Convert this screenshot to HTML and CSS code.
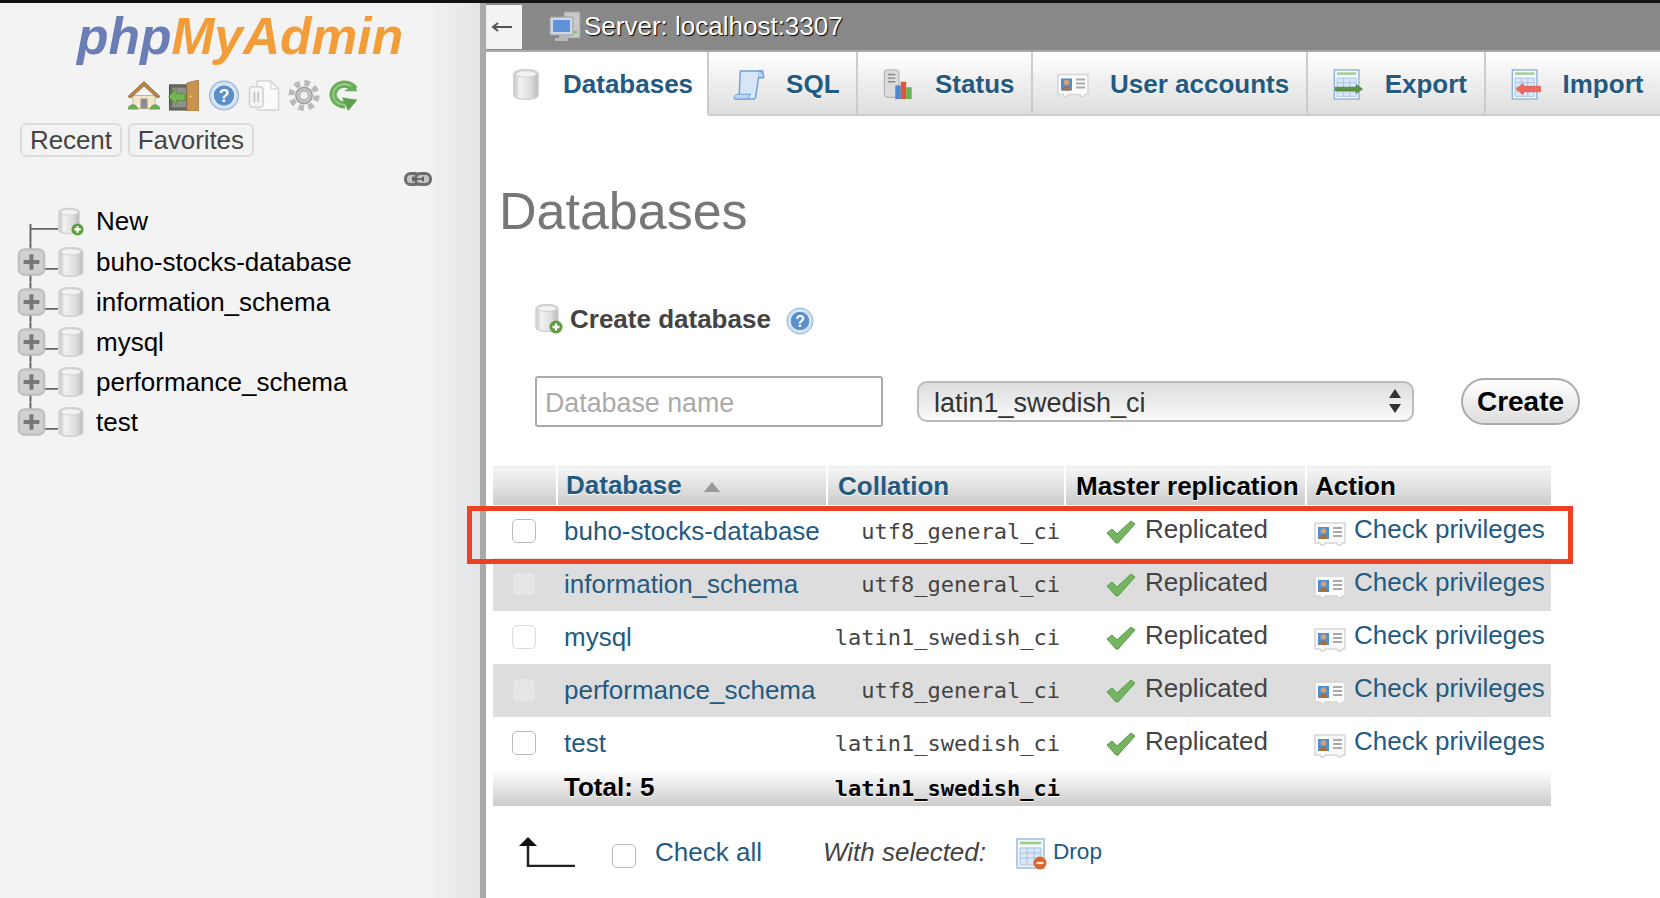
FILE: index.html
```html
<!DOCTYPE html>
<html lang="en">
<head>
    <meta charset="UTF-8">
    <meta name="viewport" content="width=device-width, initial-scale=1.0">
    <title>phpMyAdmin - Databases</title>
    <link rel="stylesheet" href="styles.css">
</head>
<body>
    <svg class="gradient-defs" xmlns="http://www.w3.org/2000/svg">
        <defs>
            <linearGradient id="cyl" x1="0" x2="1" y1="0" y2="0">
                <stop offset="0" stop-color="#c4c4c4"/>
                <stop offset="0.25" stop-color="#f2f2f2"/>
                <stop offset="0.7" stop-color="#dcdcdc"/>
                <stop offset="1" stop-color="#b9b9b9"/>
            </linearGradient>
        </defs>
    </svg>
    <svg class="icon-defs" xmlns="http://www.w3.org/2000/svg">
        <symbol id="i-db" viewBox="0 0 24 28">
            <path d="M1 5c0-6 22-6 22 0v18c0 6-22 6-22 0z" fill="url(#cyl)" stroke="#d2d2d2" stroke-width="1.500"/>
            <ellipse cx="12" cy="4.500" rx="9.500" ry="3" fill="#f2f2f2" stroke="#d0d0d0"/>
        </symbol>
        <symbol id="i-dbnew" viewBox="0 0 28 30">
            <path d="M1 5c0-6 22-6 22 0v18c0 6-22 6-22 0z" fill="url(#cyl)" stroke="#d2d2d2" stroke-width="1.500"/>
            <ellipse cx="12" cy="4.500" rx="9.500" ry="3" fill="#f2f2f2" stroke="#d0d0d0"/>
            <circle cx="21" cy="23" r="6.500" fill="#5f9e3c"/>
            <path d="M21 19.500v7M17.500 23h7" stroke="#fff" stroke-width="2.400"/>
        </symbol>
        <symbol id="i-home" viewBox="0 0 32 30">
            <path d="M5 15h22v13H5z" fill="#f3e7d0" stroke="#c9b48f"/>
            <path d="M0 16 16 1l16 15-2.500 1.500L16 5.500 2.500 17.500z" fill="#b5854f" stroke="#8f6534" stroke-width=".8"/>
            <path d="M12.500 18h7v10h-7z" fill="#8d8d8d"/>
            <path d="M0 27c2-4 7-4 9-1l2 3H0zM32 27c-2-4-7-4-9-1l-2 3h11z" fill="#6cab54"/>
        </symbol>
        <symbol id="i-exit" viewBox="0 0 32 32">
            <path d="M1 5h20v26H1z" fill="#6b6b62" stroke="#4e4e46"/>
            <path d="M4 8h14v20H4z" fill="#8f918a"/>
            <path d="M19 3l12-3v32H19z" fill="#c8924f" stroke="#a0713a" stroke-width=".8"/>
            <path d="M0 17l8-8v5h9v7H8v5z" fill="#74b552" stroke="#4e8a35" stroke-width=".8"/>
            <circle cx="23" cy="17" r="1" fill="#f2d25c"/>
        </symbol>
        <symbol id="i-help" viewBox="0 0 30 30">
            <circle cx="15" cy="15" r="14" fill="#cfdff2" stroke="#8fb2dc"/>
            <circle cx="15" cy="15" r="10.500" fill="#5b8fcb" stroke="#f4f8fc" stroke-width="1"/>
            <text x="15" y="21" text-anchor="middle" font-family="Liberation Sans" font-weight="700" font-size="17" fill="#fff">?</text>
        </symbol>
        <symbol id="i-docs" viewBox="0 0 32 32">
            <path d="M9 1h14l8 8v22H9z" fill="#fafafa" stroke="#d4d4d4" stroke-width="1.500"/>
            <path d="M23 1v8h8" fill="none" stroke="#dcdcdc" stroke-width="1.500"/>
            <rect x="1" y="7" width="14" height="21" rx="3" fill="#f4f4f4" stroke="#cfcfcf" stroke-width="1.500"/>
            <path d="M6 12v11M10 12v11" stroke="#c9c9c9" stroke-width="2"/>
        </symbol>
        <symbol id="i-gear" viewBox="0 0 32 32">
            <circle cx="16" cy="16" r="13" fill="none" stroke="#b9b9b9" stroke-width="6" stroke-dasharray="5.600 4.610"/>
            <circle cx="16" cy="16" r="8.500" fill="#c4c4c4" stroke="#9c9c9c" stroke-width="1.500"/>
            <circle cx="16" cy="16" r="4.500" fill="#efefef" stroke="#a5a5a5"/>
        </symbol>
        <symbol id="i-reload" viewBox="0 0 28 30">
            <path d="M24 9A11 10 0 1 0 15 24" fill="none" stroke="#6aad5a" stroke-width="7"/>
            <path d="M24 9A11 10 0 1 0 15 24" fill="none" stroke="#9fd28f" stroke-width="1.500"/>
            <path d="M12 17l15 2-9 11z" fill="#5f9f50"/>
            <path d="M14 11h13l-3-7z" fill="#6aad5a"/>
        </symbol>
        <symbol id="i-chain" viewBox="0 0 28 14">
            <rect x="1.500" y="1.500" width="15" height="11" rx="5" fill="#c4c4c4" stroke="#6d6d6d" stroke-width="3"/>
            <rect x="11.500" y="1.500" width="15" height="11" rx="5" fill="#c4c4c4" stroke="#6d6d6d" stroke-width="3"/>
            <path d="M8 7h12M9 4.500v5M19 4.500v5" stroke="#555" stroke-width="1.500"/>
        </symbol>
        <symbol id="i-scroll" viewBox="0 0 32 32">
            <path d="M7 2h24c-4 0-5 3-5 6l-3 20c0 2-2 3-4 3H1c3 0 4-2 5-5z" fill="#d6e6f8" stroke="#6f9fd8" stroke-width="1.500"/>
            <path d="M25 2c3 0 6 1 6 4v3h-5" fill="#b9d3f1" stroke="#6f9fd8" stroke-width="1.500"/>
            <path d="M1 31c-1-3 1-5 5-5h12c-2 1-3 3-2 5z" fill="#b9d3f1" stroke="#6f9fd8"/>
        </symbol>
        <symbol id="i-status" viewBox="0 0 32 34">
            <rect x="1" y="1" width="16" height="30" rx="3" fill="#dcdcdc" stroke="#a5a5a5"/>
            <path d="M5 6h8M5 10h8M5 14h8" stroke="#8a8a8a" stroke-width="1.500"/>
            <path d="M13 18h6v15h-6z" fill="#4a86d3"/>
            <path d="M19 14h6v19h-6z" fill="#d95a3c"/>
            <path d="M25 20h6v13h-6z" fill="#6db04f"/>
        </symbol>
        <symbol id="i-card" viewBox="0 0 32 26">
            <path d="M1 3h30v20h-3l-1 2h-3l-1-2H11l-1 2H7l-1-2H1z" fill="#fbfbfb" stroke="#d6d6d6" stroke-width="1.500"/>
            <rect x="4" y="7" width="11" height="12" fill="#4a90d9"/>
            <circle cx="9.500" cy="11" r="2.800" fill="#d9a06b"/>
            <path d="M5.500 19c0-6 8-6 8 0z" fill="#a96f3c"/>
            <path d="M19 8h9M19 12h9M19 16h9" stroke="#a9a9a9" stroke-width="2"/>
        </symbol>
        <symbol id="i-export" viewBox="0 0 32 34">
            <rect x="1" y="1" width="27" height="32" fill="#f2f7fd" stroke="#8db0dc" stroke-width="1.500"/>
            <path d="M4 5h21" stroke="#9dcc84" stroke-width="2.500"/>
            <path d="M4 10h21v20H4zM4 15h21M4 20h21M4 25h21M11 10v20M18 10v20" fill="#dbe7f5" stroke="#a9c3e3"/>
            <path d="M2 20h23v-3l7 5-7 5v-3H2z" fill="#5d9345" stroke="#3f7330" stroke-width=".6"/>
        </symbol>
        <symbol id="i-import" viewBox="0 0 32 34">
            <rect x="1" y="1" width="27" height="32" fill="#f2f7fd" stroke="#8db0dc" stroke-width="1.500"/>
            <path d="M4 5h21" stroke="#9dcc84" stroke-width="2.500"/>
            <path d="M4 10h21v20H4zM4 15h21M4 20h21M4 25h21M11 10v20M18 10v20" fill="#dbe7f5" stroke="#a9c3e3"/>
            <path d="M32 19H13v-3l-8 6 8 6v-3h19z" fill="#ee6a62" stroke="#d63f36" stroke-width=".6"/>
        </symbol>
        <symbol id="i-drop" viewBox="0 0 31 32">
            <rect x="1" y="1" width="27" height="29" fill="#f2f7fd" stroke="#9dbbe0" stroke-width="1.500"/>
            <path d="M4 5h21" stroke="#9dcc84" stroke-width="2.500"/>
            <path d="M4 10h21v17H4zM4 15h21M4 20h21M11 10v17M18 10v17" fill="#dbe7f5" stroke="#a9c3e3"/>
            <circle cx="24" cy="25" r="6.500" fill="#d9682c"/>
            <path d="M20.500 25h7" stroke="#fbe3d2" stroke-width="2.200"/>
        </symbol>
        <symbol id="i-check" viewBox="0 0 30 24">
            <path d="M1 13l5-4 5 5L25 1l4 3-17 19h-2z" fill="#75b562" stroke="#599a49"/>
        </symbol>
        <symbol id="i-server" viewBox="0 0 32 32">
            <rect x="15" y="1" width="16" height="26" fill="#c9c9c9" stroke="#a0a0a0"/>
            <path d="M25 21h3" stroke="#6fbf5a" stroke-width="2"/>
            <rect x="1" y="6" width="23" height="18" rx="1" fill="#cfd8e4" stroke="#9b9b9b"/>
            <rect x="4" y="9" width="17" height="12" fill="#5f92d8"/>
            <path d="M10 24h5v3h4v3H6v-3h4z" fill="#b8b8b8"/>
        </symbol>
    </svg>

    <div class="top-strip"></div>

    <div class="page">
        <nav class="sidebar">
            <div class="logo"><span class="logo-php">php</span><span class="logo-my">MyAdmin</span></div>

            <div class="quick-icons">
                <svg class="quick-icon"><use href="#i-home"/></svg>
                <svg class="quick-icon"><use href="#i-exit"/></svg>
                <svg class="quick-icon"><use href="#i-help"/></svg>
                <svg class="quick-icon"><use href="#i-docs"/></svg>
                <svg class="quick-icon"><use href="#i-gear"/></svg>
                <svg class="quick-icon"><use href="#i-reload"/></svg>
            </div>

            <div class="recent-tabs">
                <button class="recent-tab">Recent</button>
                <button class="recent-tab">Favorites</button>
            </div>

            <div class="link-row">
                <svg class="chain-icon"><use href="#i-chain"/></svg>
            </div>

            <ul class="tree">
                <li class="tree-row">
                    <svg class="tree-lines" viewBox="0 0 59 40"><path d="M31 22v19M31 27h28" fill="none" stroke="#666" stroke-width="2"/></svg>
                    <svg class="tree-db"><use href="#i-dbnew"/></svg>
                    <span class="tree-name tree-name-new">New</span>
                </li>
                <li class="tree-row">
                    <svg class="tree-lines" viewBox="0 0 59 40"><path d="M31 0v40M45 27h14" fill="none" stroke="#666" stroke-width="2"/><rect x="19" y="7" width="26" height="26" rx="6" fill="#d0d0d0" stroke="#bcbcbc" stroke-width="2"/><path d="M24 20h16M32 12v16" stroke="#777" stroke-width="4"/></svg>
                    <svg class="tree-db"><use href="#i-db"/></svg>
                    <span class="tree-name">buho-stocks-database</span>
                </li>
                <li class="tree-row">
                    <svg class="tree-lines" viewBox="0 0 59 40"><path d="M31 0v40M45 27h14" fill="none" stroke="#666" stroke-width="2"/><rect x="19" y="7" width="26" height="26" rx="6" fill="#d0d0d0" stroke="#bcbcbc" stroke-width="2"/><path d="M24 20h16M32 12v16" stroke="#777" stroke-width="4"/></svg>
                    <svg class="tree-db"><use href="#i-db"/></svg>
                    <span class="tree-name">information_schema</span>
                </li>
                <li class="tree-row">
                    <svg class="tree-lines" viewBox="0 0 59 40"><path d="M31 0v40M45 27h14" fill="none" stroke="#666" stroke-width="2"/><rect x="19" y="7" width="26" height="26" rx="6" fill="#d0d0d0" stroke="#bcbcbc" stroke-width="2"/><path d="M24 20h16M32 12v16" stroke="#777" stroke-width="4"/></svg>
                    <svg class="tree-db"><use href="#i-db"/></svg>
                    <span class="tree-name">mysql</span>
                </li>
                <li class="tree-row">
                    <svg class="tree-lines" viewBox="0 0 59 40"><path d="M31 0v40M45 27h14" fill="none" stroke="#666" stroke-width="2"/><rect x="19" y="7" width="26" height="26" rx="6" fill="#d0d0d0" stroke="#bcbcbc" stroke-width="2"/><path d="M24 20h16M32 12v16" stroke="#777" stroke-width="4"/></svg>
                    <svg class="tree-db"><use href="#i-db"/></svg>
                    <span class="tree-name">performance_schema</span>
                </li>
                <li class="tree-row">
                    <svg class="tree-lines" viewBox="0 0 59 40"><path d="M31 0v10M45 27h14" fill="none" stroke="#666" stroke-width="2"/><rect x="19" y="7" width="26" height="26" rx="6" fill="#d0d0d0" stroke="#bcbcbc" stroke-width="2"/><path d="M24 20h16M32 12v16" stroke="#777" stroke-width="4"/></svg>
                    <svg class="tree-db"><use href="#i-db"/></svg>
                    <span class="tree-name">test</span>
                </li>
            </ul>
        </nav>

        <main class="content">
            <div class="server-bar">
                <div class="back-button">
                    <svg class="back-arrow" viewBox="0 0 22 14"><path d="M22 7H4M8 3 3 7l5 4" fill="none" stroke="#555" stroke-width="2"/></svg>
                </div>
                <svg class="server-icon"><use href="#i-server"/></svg>
                <span class="server-name">Server: localhost:3307</span>
            </div>

            <div class="tabs">
                <a class="tab tab-active"><svg class="tab-icon"><use href="#i-db"/></svg>Databases</a>
                <a class="tab"><svg class="tab-icon"><use href="#i-scroll"/></svg>SQL</a>
                <a class="tab"><svg class="tab-icon"><use href="#i-status"/></svg>Status</a>
                <a class="tab"><svg class="tab-icon"><use href="#i-card"/></svg>User accounts</a>
                <a class="tab"><svg class="tab-icon"><use href="#i-export"/></svg>Export</a>
                <a class="tab"><svg class="tab-icon"><use href="#i-import"/></svg>Import</a>
            </div>

            <h1 class="page-title">Databases</h1>

            <div class="create-title">
                <svg class="create-icon"><use href="#i-dbnew"/></svg>
                <strong>Create database</strong>
                <svg class="create-help"><use href="#i-help"/></svg>
            </div>

            <form class="create-form">
                <input class="db-name" type="text" placeholder="Database name">
                <div class="collation-select">
                    <select>
                        <option>latin1_swedish_ci</option>
                    </select>
                    <svg class="select-arrows" viewBox="0 0 12 24"><path d="M6 0l6 9H0zM6 24l6-9H0z" fill="#333"/></svg>
                </div>
                <button class="create-button" type="button">Create</button>
            </form>

            <div class="table-wrap">
                <table class="db-table">
                    <colgroup>
                        <col class="col-check">
                        <col class="col-name">
                        <col class="col-collation">
                        <col class="col-replication">
                        <col class="col-action">
                    </colgroup>
                    <thead>
                        <tr>
                            <th></th>
                            <th><a class="sort-link">Database</a><svg class="sort-arrow" viewBox="0 0 16 10"><path d="M8 0l8 10H0z" fill="#999"/></svg></th>
                            <th class="th-link">Collation</th>
                            <th class="th-wide">Master replication</th>
                            <th>Action</th>
                        </tr>
                    </thead>
                    <tbody>
                        <tr>
                            <td class="cell-check"><input class="row-check row-check-strong" type="checkbox"></td>
                            <td><a class="db-link">buho-stocks-database</a></td>
                            <td class="cell-collation">utf8_general_ci</td>
                            <td><div class="status-cell"><svg class="check-icon"><use href="#i-check"/></svg>Replicated</div></td>
                            <td><div class="action-cell"><svg class="card-icon"><use href="#i-card"/></svg><a class="db-link">Check privileges</a></div></td>
                        </tr>
                        <tr class="row-alt">
                            <td class="cell-check"><input class="row-check" type="checkbox"></td>
                            <td><a class="db-link">information_schema</a></td>
                            <td class="cell-collation">utf8_general_ci</td>
                            <td><div class="status-cell"><svg class="check-icon"><use href="#i-check"/></svg>Replicated</div></td>
                            <td><div class="action-cell"><svg class="card-icon"><use href="#i-card"/></svg><a class="db-link">Check privileges</a></div></td>
                        </tr>
                        <tr>
                            <td class="cell-check"><input class="row-check" type="checkbox"></td>
                            <td><a class="db-link">mysql</a></td>
                            <td class="cell-collation">latin1_swedish_ci</td>
                            <td><div class="status-cell"><svg class="check-icon"><use href="#i-check"/></svg>Replicated</div></td>
                            <td><div class="action-cell"><svg class="card-icon"><use href="#i-card"/></svg><a class="db-link">Check privileges</a></div></td>
                        </tr>
                        <tr class="row-alt">
                            <td class="cell-check"><input class="row-check" type="checkbox"></td>
                            <td><a class="db-link">performance_schema</a></td>
                            <td class="cell-collation">utf8_general_ci</td>
                            <td><div class="status-cell"><svg class="check-icon"><use href="#i-check"/></svg>Replicated</div></td>
                            <td><div class="action-cell"><svg class="card-icon"><use href="#i-card"/></svg><a class="db-link">Check privileges</a></div></td>
                        </tr>
                        <tr>
                            <td class="cell-check"><input class="row-check row-check-strong" type="checkbox"></td>
                            <td><a class="db-link">test</a></td>
                            <td class="cell-collation">latin1_swedish_ci</td>
                            <td><div class="status-cell"><svg class="check-icon"><use href="#i-check"/></svg>Replicated</div></td>
                            <td><div class="action-cell"><svg class="card-icon"><use href="#i-card"/></svg><a class="db-link">Check privileges</a></div></td>
                        </tr>
                    </tbody>
                    <tfoot>
                        <tr>
                            <td></td>
                            <td>Total: 5</td>
                            <td class="cell-collation">latin1_swedish_ci</td>
                            <td></td>
                            <td></td>
                        </tr>
                    </tfoot>
                </table>
                <div class="highlight-box"></div>
            </div>

            <div class="bulk-row">
                <svg class="bulk-arrow" viewBox="0 0 57 30"><path d="M10 30V4M10 29h47" fill="none" stroke="#222" stroke-width="2.500"/><path d="M10 0l9 9H1z" fill="#111"/></svg>
                <input class="row-check row-check-strong" type="checkbox">
                <a class="db-link check-all">Check all</a>
                <em class="with-selected">With selected:</em>
                <svg class="drop-icon"><use href="#i-drop"/></svg>
                <a class="drop-link">Drop</a>
            </div>
        </main>
    </div>
</body>
</html>
```

FILE: styles.css
```css
* {
    box-sizing: border-box;
}

html, body {
    height: 100%;
}

body {
    margin: 0;
    overflow: hidden;
    background-color: #fff;
    font-family: "Liberation Sans", Arial, sans-serif;
    font-size: 26px;
    color: #444;
}

/* display:none would switch the gradient off, so it gets its own empty svg */
.gradient-defs {
    position: absolute;
    width: 0;
    height: 0;
}

.icon-defs {
    display: none;
}

svg {
    flex-shrink: 0;
}

.top-strip {
    height: 3px;
    background-color: #111;
}

.page {
    display: flex;
    height: 895px;
}

/* sidebar */

.sidebar {
    width: 486px;
    flex-shrink: 0;
    border-right: 6px solid #aaa;
    background: linear-gradient(to right, #f3f3f3 0%, #f3f3f3 88%, #e3e4e6 100%);
}

.logo {
    margin: 2px 0 0 77px;
    height: 62px;
    font-size: 51.500px;
    line-height: 62px;
    font-weight: bold;
    font-style: italic;
}

.logo-php {
    color: #6a7db5;
}

.logo-my {
    color: #f29d38;
}

.quick-icons {
    display: flex;
    gap: 8px;
    margin: 13px 0 0 128px;
}

.quick-icon {
    width: 32px;
    height: 31px;
}

.recent-tabs {
    display: flex;
    gap: 6px;
    margin: 12px 0 0 20px;
}

.recent-tab {
    height: 34px;
    padding: 0 8px;
    background: #f3f3f3;
    border: 2px solid #ddd;
    border-radius: 6px;
    font-family: inherit;
    font-size: 26px;
    line-height: 28px;
    letter-spacing: -0.1px;
    color: #444;
}

.link-row {
    display: flex;
    justify-content: flex-end;
    padding-right: 48px;
    margin-top: 15px;
}

.chain-icon {
    width: 28px;
    height: 14px;
}

.tree {
    list-style: none;
    margin: 16px 0 0;
    padding: 0;
}

.tree-row {
    display: flex;
    align-items: center;
    height: 40px;
    color: #000;
}

.tree-lines {
    width: 58px;
    height: 40px;
}

.tree-db {
    width: 26px;
    height: 30px;
}

.tree-name {
    margin-left: 12px;
}

.tree-name-new {
    margin-top: -1px;
}

/* top of the main column */

.content {
    flex: 1;
    min-width: 0;
}

.server-bar {
    display: flex;
    align-items: center;
    height: 47px;
    background-color: #888;
}

.back-button {
    display: flex;
    align-items: center;
    justify-content: center;
    width: 36px;
    height: 44px;
    padding-right: 6px;
    background-color: #f3f3f3;
}

.back-arrow {
    width: 22px;
    height: 14px;
}

.server-icon {
    width: 32px;
    height: 32px;
    margin-left: 27px;
}

.server-name {
    margin-left: 3px;
    color: #fff;
    text-shadow: 1px 1px 1px #000;
}

.tabs {
    display: flex;
    height: 66px;
    border-top: 2px solid #aaa;
}

.tab {
    display: flex;
    align-items: center;
    gap: 21px;
    padding: 2px 16.500px 0 24px;
    background: linear-gradient(to bottom, #fff, #dedede);
    border-right: 2px solid #ccc;
    border-bottom: 2px solid #ccc;
    box-shadow: 2px 0 0 #fff;
    font-size: 26px;
    font-weight: bold;
    color: #235a81;
    text-shadow: 0 1px 0 #fff;
    white-space: nowrap;
}

.tab-active {
    padding-right: 14px;
    background: #fff;
    border-bottom-color: #fff;
}

.tab-icon {
    width: 32px;
    height: 31px;
}

/* create database */

.page-title {
    margin: 65px 0 0 13px;
    font-size: 52px;
    line-height: 60px;
    font-weight: normal;
    color: #777;
}

.create-title {
    display: flex;
    align-items: center;
    gap: 7px;
    height: 30px;
    margin: 63px 0 0 49px;
}

.create-icon {
    width: 28px;
    height: 30px;
}

.create-help {
    width: 28px;
    height: 28px;
    margin: 4px 0 0 8px;
}

.create-form {
    display: flex;
    align-items: center;
    margin: 42px 0 0 49px;
}

.db-name {
    width: 348px;
    height: 51px;
    padding: 3px 8px 0;
    border: 2px solid #aaa;
    border-radius: 3px;
    font-family: inherit;
    font-size: 26.800px;
    color: #444;
}

.db-name::placeholder {
    color: #aaa;
    opacity: 1;
}

.collation-select {
    position: relative;
    width: 497px;
    height: 41px;
    margin-left: 34px;
}

.collation-select select {
    width: 100%;
    height: 100%;
    padding: 2px 0 0 15px;
    appearance: none;
    background: linear-gradient(to bottom, #ddd, #fafafa);
    border: 2px solid #bbb;
    border-radius: 10px;
    font-family: inherit;
    font-size: 27px;
    color: #333;
}

.select-arrows {
    position: absolute;
    right: 13px;
    top: 8px;
    width: 12px;
    height: 24px;
}

.create-button {
    width: 119px;
    height: 47px;
    margin-left: 47px;
    background: linear-gradient(to bottom, #fff, #ddd);
    border: 2px solid #aaa;
    border-radius: 24px;
    font-family: inherit;
    font-size: 28px;
    font-weight: bold;
    color: #000;
    text-shadow: 0 1px 0 #fff;
}

/* databases table */

.table-wrap {
    position: relative;
    width: 1058px;
    margin: 39px 0 0 7px;
}

.db-table {
    width: 1058px;
    table-layout: fixed;
    border-collapse: collapse;
}

.col-check {
    width: 64px;
}

.col-name {
    width: 270px;
}

.col-collation {
    width: 238px;
}

.col-replication {
    width: 241px;
}

.col-action {
    width: 245px;
}

.db-table th {
    height: 38px;
    padding: 0 0 0 8px;
    background: linear-gradient(to bottom, #f6f6f6, #ccc);
    border-right: 2px solid #fff;
    border-top: 2px solid #eee;
    text-align: left;
    color: #000;
    text-shadow: 0 1px 0 #fff;
    white-space: nowrap;
}

.db-table th:last-child {
    border-right: none;
}

.db-table .th-link {
    padding-left: 10px;
    color: #235a81;
}

.db-table .th-wide {
    padding-left: 10px;
}

.sort-link {
    position: relative;
    top: -1px;
    color: #235a81;
}

.sort-arrow {
    position: relative;
    top: -3px;
    width: 16px;
    height: 10px;
    margin-left: 22px;
}

.db-table td {
    height: 53px;
    padding: 0 0 0 7px;
    white-space: nowrap;
}

.row-alt td {
    background-color: #ddd;
}

.db-table .cell-check {
    padding: 0 0 2px 19px;
}

.db-table .cell-collation {
    padding: 0 5px 0 0;
    text-align: right;
    font-family: "DejaVu Sans Mono", "Liberation Mono", monospace;
    font-size: 22px;
}

.db-link {
    color: #235a81;
}

.row-check {
    display: block;
    width: 24px;
    height: 24px;
    margin: 0;
    appearance: none;
    background-color: transparent;
    border: 1px solid #ddd;
    border-radius: 5px;
}

.row-alt .row-check {
    background-color: #e6e6e6;
}

.row-check-strong {
    border-color: #bbb;
}

.status-cell {
    display: flex;
    align-items: center;
    gap: 9px;
    padding-left: 34px;
    padding-bottom: 4px;
}

.check-icon {
    position: relative;
    top: 2px;
    width: 30px;
    height: 24px;
}

.action-cell {
    display: flex;
    align-items: center;
    gap: 8px;
    padding: 0 0 4px 1px;
}

.card-icon {
    position: relative;
    top: 3px;
    width: 32px;
    height: 26px;
}

.db-table tfoot td {
    height: 36px;
    padding-bottom: 2px;
    background: linear-gradient(to bottom, #fff, #ccc);
    font-weight: bold;
    color: #000;
    text-shadow: 0 1px 0 #fff;
}

.highlight-box {
    position: absolute;
    left: -26px;
    top: 40px;
    width: 1106px;
    height: 58px;
    border: 5px solid #ee4023;
}

/* below the table */

.bulk-row {
    display: flex;
    align-items: center;
    height: 36px;
    margin: 28px 0 0 32px;
}

.bulk-arrow {
    width: 57px;
    height: 30px;
}

.bulk-row .row-check {
    margin: 8px 0 0 37px;
}

.check-all {
    margin-left: 19px;
}

.with-selected {
    margin-left: 61px;
}

.drop-icon {
    width: 31px;
    height: 32px;
    margin: 4px 0 0 30px;
}

.drop-link {
    margin-left: 6px;
    font-size: 22.600px;
    color: #235a81;
}
```
